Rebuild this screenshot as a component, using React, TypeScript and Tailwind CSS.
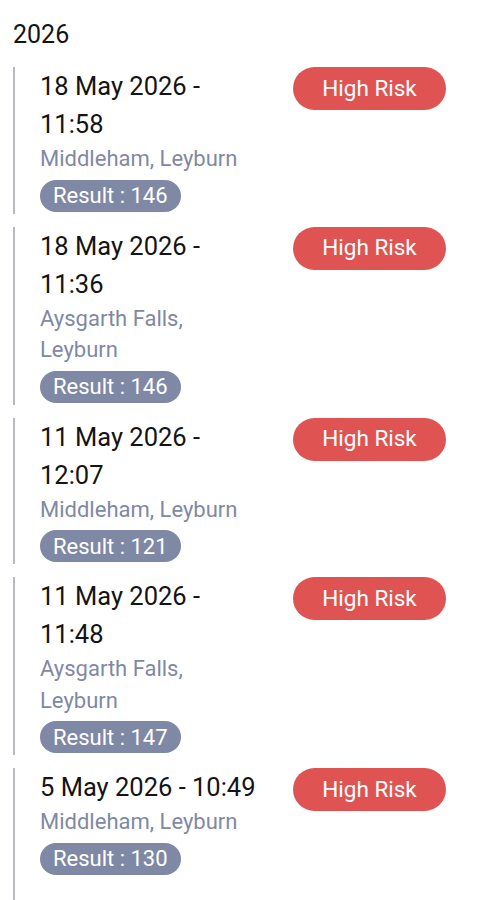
const readings = [
  { date: "18 May 2026 - 11:58", place: "Middleham, Leyburn", result: 146 },
  { date: "18 May 2026 - 11:36", place: "Aysgarth Falls, Leyburn", result: 146 },
  { date: "11 May 2026 - 12:07", place: "Middleham, Leyburn", result: 121 },
  { date: "11 May 2026 - 11:48", place: "Aysgarth Falls, Leyburn", result: 147 },
  { date: "5 May 2026 - 10:49", place: "Middleham, Leyburn", result: 130 },
];

function ReadingRow({ date, place, result }: { date: string; place: string; result: number }) {
  return (
    <div className="flex items-start border-l-2 border-[#b9bac2] pb-[2px] pl-[25px] last:pb-[26px]">
      <div className="w-[220px]">
        <div className="text-[25.5px] leading-[38px] text-[#141414]">{date}</div>
        <div className="text-[22px] leading-[31.5px] text-[#7f89a4]">{place}</div>
        <div className="mt-[5px] inline-flex h-[32px] items-center rounded-full bg-[#7f89a5] px-[13px] text-[22px] text-white">
          Result : {result}
        </div>
      </div>
      <div className="ml-[33px] flex h-[43px] w-[153px] items-center justify-center rounded-full bg-[#e05353] text-[22.5px] text-white">
        High Risk
      </div>
    </div>
  );
}

export default function App() {
  return (
    <div className="min-h-[900px] bg-white px-[13px] pt-[23px] font-['Roboto',sans-serif]">
      <div className="text-[25px] leading-[24px] text-[#141414]">2026</div>
      <div className="mt-[20px] flex flex-col gap-[13px]">
        {readings.map((r, i) => (
          <ReadingRow key={i} {...r} />
        ))}
      </div>
    </div>
  );
}
